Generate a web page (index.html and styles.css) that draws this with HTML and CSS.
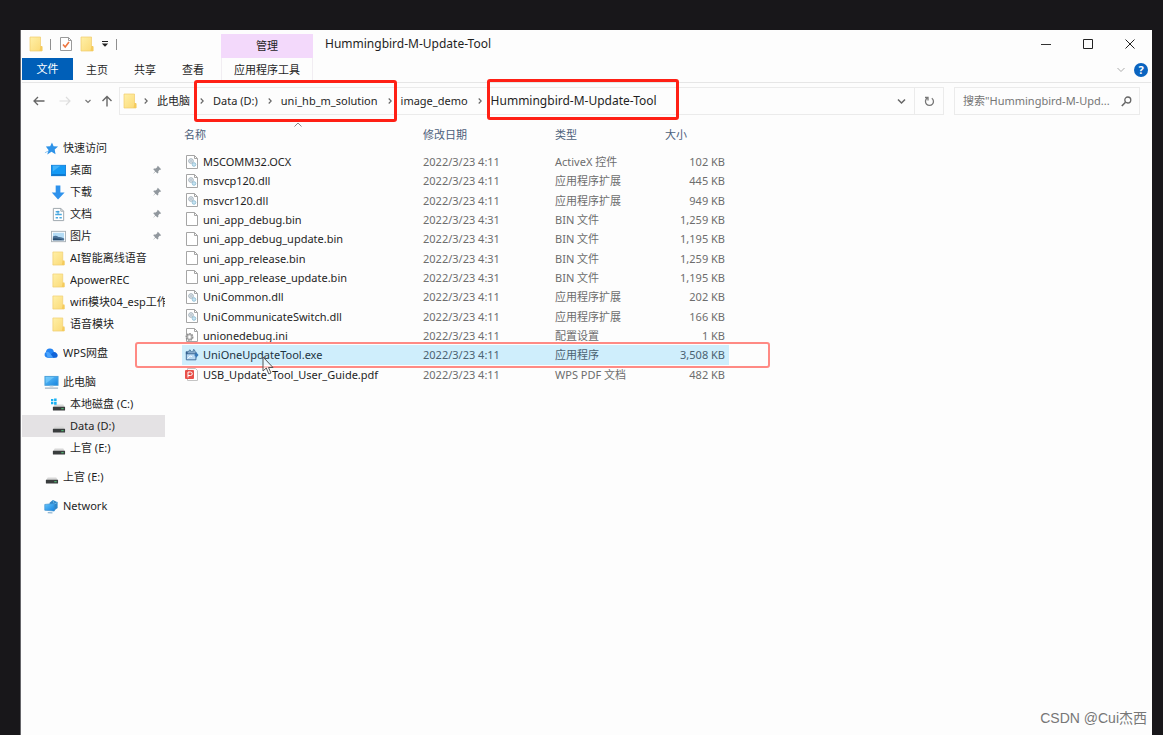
FILE: index.html
```
<!DOCTYPE html>
<html lang="zh-CN">
<head>
<meta charset="utf-8">
<title>Hummingbird-M-Update-Tool</title>
<link rel="stylesheet" href="styles.css">
</head>
<body>
<svg class="defs" aria-hidden="true">
  <defs>
    <linearGradient id="gf" x1="0" x2="1" y1="0" y2="1"><stop offset="0" stop-color="#fff0a8"/><stop offset="1" stop-color="#fbd975"/></linearGradient>
    <linearGradient id="gb" x1="0" x2="1" y1="0" y2="1"><stop offset="0" stop-color="#67c6fb"/><stop offset="1" stop-color="#1583e0"/></linearGradient>
    <symbol id="folder" viewBox="0 0 14 16"><path d="M1 1h10.500v10H13v4H1z" fill="url(#gf)" stroke="#f0cc6c" stroke-width=".7"/><path d="M10.500 15l1-5h1.800v5z" fill="#f5cb5c"/></symbol>
    <symbol id="page" viewBox="0 0 14 16"><path d="M1.500 1.500h8l3 3v10h-11z" fill="#fff" stroke="#a5a5a5"/><path d="M9.500 1.500v3h3" fill="none" stroke="#a5a5a5"/></symbol>
    <symbol id="dll" viewBox="0 0 14 16"><use href="#page"/><circle cx="6" cy="7" r="2.300" fill="#e4ebf0" stroke="#a3b0ba"/><circle cx="6" cy="7" r=".8" fill="#97a6b3"/><circle cx="9" cy="10.500" r="1.800" fill="#c8e4f2" stroke="#98c3d8"/></symbol>
    <symbol id="ini" viewBox="0 0 14 16"><use href="#page"/><circle cx="4.500" cy="10" r="3.200" fill="#e5e5e5" stroke="#8f8f8f" stroke-width="1.600" stroke-dasharray="1.600 .8"/><circle cx="4.500" cy="10" r="2.500" fill="#ddd" stroke="#999"/><circle cx="4.500" cy="10" r="1" fill="#fff"/></symbol>
    <symbol id="exe" viewBox="0 0 16 16"><path d="M1.500 4.500h11v9h-11z" fill="#b9d9f3" stroke="#35618f"/><path d="M1 4h2v2h10v1H1z" fill="#35618f"/><path d="M4 4l1.500-2L7 4M9 4l1-2.500 1.500 2" fill="none" stroke="#35618f"/><path d="M11 6.500h1.500V4.500l3 3.500-3 3.500v-2H11z" fill="#3679b9"/><path d="M3 12l3-3 2 1" stroke="#fff" fill="none"/></symbol>
    <symbol id="pdf" viewBox="0 0 14 16"><path d="M2.500 2.500h8l2 2v10h-10z" fill="#fff" stroke="#c4c4c4"/><rect x="0" y="4" width="9" height="9" rx="1" fill="#e8504a"/><path d="M3 11.500V6h2.500a1.500 1.500 0 0 1 0 3.500H3" fill="none" stroke="#fff"/></symbol>
    <symbol id="star" viewBox="0 0 16 16"><path d="M8.500 1.500l1.700 4.200 4.800.2-3.600 3.200.9 4.900-4.300-2.500L3.500 14.500l1.300-5L2 5.900l4.600-.2z" fill="#2e93e8"/><path d="M1 12.500l4-2" stroke="#8cc4f2"/></symbol>
    <symbol id="desktop" viewBox="0 0 16 16"><rect x=".5" y="2.500" width="15" height="11" fill="#149af5" stroke="#1683dc"/><path d="M1 12h14v1.500H1z" fill="#0b70c4"/><path d="M2 3h8L2 9z" fill="#43b3fa"/></symbol>
    <symbol id="down" viewBox="0 0 16 16"><path d="M5 .5h5v7.500h4.500L7.500 15.500.8 8H5z" fill="#2e92ec"/></symbol>
    <symbol id="doc" viewBox="0 0 16 16"><path d="M2.500 1.500h8l3 3v10h-11z" fill="#fff" stroke="#9aa3aa"/><path d="M10.500 1.500v3h3" fill="none" stroke="#9aa3aa"/><path d="M5 5h4M4.500 8h7M5 11.500h2.500M9 11.500h2.500" stroke="#4baae0" stroke-width="1.500"/><path d="M7.500 4v4" stroke="#3a9bd8"/></symbol>
    <symbol id="pic" viewBox="0 0 16 16"><rect x=".5" y="2.500" width="15" height="11" fill="#fff" stroke="#a9b2b8"/><rect x="2" y="4" width="12" height="8" fill="#b4dcf6"/><path d="M2 8q3-2 6 .5 3-.5 6 1.500v2H2z" fill="#4c7398"/><path d="M2 10q5-1 12 2H2z" fill="#294e70"/></symbol>
    <symbol id="pin" viewBox="0 0 12 12"><path d="M7 1l4 4-1 .8-.8-.2-1.700 1.800.1 2-1 .8L4.200 8 1 11l2.800-3.500L1.500 5l.9-.9 2.100.1L6.500 2.500l-.2-.8z" fill="#91989e"/></symbol>
    <symbol id="cloud" viewBox="0 0 16 16"><path d="M3.500 12.500a3.300 3.300 0 0 1-1.500-6A4.300 4.300 0 0 1 10.500 6L11.500 12.500z" fill="#2484f2"/><path d="M4 12.500L8.500 7.800a3.400 3.400 0 0 1 5 0 2.800 2.800 0 0 1-.5 4.700z" fill="#1264d8"/><path d="M2 6.500q3-1 4.500 1.500L10 12.500H4z" fill="#4ba3fb"/></symbol>
    <symbol id="pc" viewBox="0 0 16 16"><rect x="1" y="1.500" width="14" height="9.500" fill="url(#gb)" stroke="#4aa0d9"/><path d="M2 2h9L2 9z" fill="#80d1fb" opacity=".6"/><path d="M6 11.500h4V13H6z" fill="#d5dfe6"/><path d="M1 14h14" stroke="#a6b7c4" stroke-width="1.400"/></symbol>
    <symbol id="drive" viewBox="0 0 16 16"><path d="M4 8h9l2 3H2z" fill="#d8d8d8"/><rect x="2" y="10.500" width="13" height="4" rx=".6" fill="#3a3d3e"/><rect x="11" y="12" width="2.500" height="1" fill="#56d47d"/></symbol>
    <symbol id="sysdrive" viewBox="0 0 16 16"><use href="#drive"/><path d="M0 2h2.500v2.500H0zM3.300 1.500H6v3H3.300zM0 5.200h2.500v2.500H0zM3.300 5.200H6v3H3.300z" fill="#18b1f3"/></symbol>
    <symbol id="net" viewBox="0 0 16 16"><path d="M9.500 1l5 2.500v6L10 13 6 9V4z" fill="#2f86c8"/><path d="M9.500 1.500l1.500 4 3.500-2" fill="none" stroke="#6db9e8"/><path d="M.8 5.800L11 4.800v8L.8 12z" fill="url(#gb)" stroke="#3b8fce" stroke-width=".7"/><path d="M4 14.500l5 .3" stroke="#8fb5d0" stroke-width="1.300"/></symbol>
    <symbol id="chev" viewBox="0 0 8 8"><path d="M2.700 1.500L5.200 4 2.700 6.500" fill="none" stroke="#666" stroke-width="1.100"/></symbol>
  </defs>
</svg>

<div class="window">
  <header class="titlebar">
    <div class="quick">
      <svg class="i14"><use href="#folder"/></svg>
      <span class="bar"></span>
      <button class="qbtn prop" aria-label="属性"><svg class="i14" viewBox="0 0 14 16"><path d="M1.500 1.500h8l3 3v10h-11z" fill="#fff" stroke="#9a9a9a"/><path d="M9.500 1.500v3h3" fill="none" stroke="#9a9a9a"/><path d="M4 8.500l2.200 2.500L10 6" fill="none" stroke="#ee7640" stroke-width="1.600"/></svg></button>
      <button class="qbtn" aria-label="新建文件夹"><svg class="i14"><use href="#folder"/></svg></button>
      <button class="qbtn more" aria-label="自定义"><svg width="8" height="8" viewBox="0 0 8 8"><path d="M1 1.500h6" stroke="#222"/><path d="M.8 3.500h6.400L4 6.800z" fill="#222"/></svg></button>
      <span class="bar"></span>
    </div>
    <div class="context">管理</div>
    <h1 class="title">Hummingbird-M-Update-Tool</h1>
    <div class="controls">
      <button aria-label="最小化"><svg width="10" height="10"><path d="M0 5.500h10" stroke="#333"/></svg></button>
      <button aria-label="最大化"><svg width="10" height="10"><path d="M.5.5h9v9h-9z" fill="none" stroke="#222"/></svg></button>
      <button aria-label="关闭"><svg width="10" height="10"><path d="M.5.5l9 9M9.500.5l-9 9" stroke="#222"/></svg></button>
    </div>
  </header>
  <nav class="tabs">
    <button class="tab file">文件</button>
    <button class="tab">主页</button>
    <button class="tab">共享</button>
    <button class="tab">查看</button>
    <button class="tab tools">应用程序工具</button>
    <span class="space"></span>
    <button class="plain" aria-label="展开功能区"><svg width="8" height="6" viewBox="0 0 8 6"><path d="M.5 1L4 4.500 7.500 1" fill="none" stroke="#aaa"/></svg></button>
    <button class="help" aria-label="帮助">?</button>
  </nav>

  <div class="navrow">
    <div class="arrows">
      <button class="plain" aria-label="后退"><svg width="12" height="10" viewBox="0 0 12 10"><path d="M11.500 5H1M5 1L1 5l4 4" fill="none" stroke="#666" stroke-width="1.300"/></svg></button>
      <button class="plain" aria-label="前进"><svg width="12" height="10" viewBox="0 0 12 10"><path d="M.5 5H11M7 1l4 4-4 4" fill="none" stroke="#ddd" stroke-width="1.200"/></svg></button>
      <button class="plain" aria-label="最近"><svg width="6" height="5" viewBox="0 0 6 5"><path d="M.5 1L3 3.500 5.500 1" fill="none" stroke="#777" stroke-width="1.200"/></svg></button>
      <button class="plain" aria-label="向上"><svg width="12" height="12" viewBox="0 0 12 12"><path d="M6 11.500V1.500M1.500 6L6 1.500 10.500 6" fill="none" stroke="#666" stroke-width="1.400"/></svg></button>
    </div>
    <div class="address">
      <svg class="i14"><use href="#folder"/></svg>
      <svg class="sep first"><use href="#chev"/></svg>
      <button class="crumb">此电脑</button>
      <svg class="sep"><use href="#chev"/></svg>
      <button class="crumb">Data (D:)</button>
      <svg class="sep"><use href="#chev"/></svg>
      <button class="crumb">uni_hb_m_solution</button>
      <svg class="sep"><use href="#chev"/></svg>
      <button class="crumb">image_demo</button>
      <svg class="sep"><use href="#chev"/></svg>
      <button class="crumb current">Hummingbird-M-Update-Tool</button>
      <span class="space"></span>
      <button class="drop" aria-label="历史记录"><svg width="9" height="7" viewBox="0 0 9 7"><path d="M1 1.500l3.500 3.500L8 1.500" fill="none" stroke="#666" stroke-width="1.500"/></svg></button>
      <button class="refresh" aria-label="刷新"><svg width="11" height="11" viewBox="0 0 11 11"><path d="M3 2.300a4 4 0 1 0 4.800-.1M1 1.500h3v3" fill="none" stroke="#777" stroke-width="1.300"/></svg></button>
    </div>
    <div class="search">
      <input type="text" aria-label="搜索" placeholder="搜索&quot;Hummingbird-M-Upd...">
      <svg width="11" height="11" viewBox="0 0 11 11"><circle cx="6.800" cy="4" r="3" fill="none" stroke="#666" stroke-width="1.300"/><path d="M4.500 6.200L.8 10" stroke="#666" stroke-width="1.600"/></svg>
    </div>
  </div>

  <div class="content">
    <aside class="side">
      <ul>
        <li class="root"><svg><use href="#star"/></svg><span>快速访问</span></li>
        <li><svg><use href="#desktop"/></svg><span>桌面</span><svg class="pin"><use href="#pin"/></svg></li>
        <li><svg><use href="#down"/></svg><span>下载</span><svg class="pin"><use href="#pin"/></svg></li>
        <li><svg><use href="#doc"/></svg><span>文档</span><svg class="pin"><use href="#pin"/></svg></li>
        <li><svg><use href="#pic"/></svg><span>图片</span><svg class="pin"><use href="#pin"/></svg></li>
        <li><svg><use href="#folder"/></svg><span>AI智能离线语音</span></li>
        <li><svg><use href="#folder"/></svg><span>ApowerREC</span></li>
        <li><svg><use href="#folder"/></svg><span>wifi模块04_esp工作</span></li>
        <li><svg><use href="#folder"/></svg><span>语音模块</span></li>
      </ul>
      <ul><li class="root"><svg><use href="#cloud"/></svg><span>WPS网盘</span></li></ul>
      <ul>
        <li class="root"><svg><use href="#pc"/></svg><span>此电脑</span></li>
        <li><svg><use href="#sysdrive"/></svg><span>本地磁盘 (C:)</span></li>
        <li class="on"><svg><use href="#drive"/></svg><span>Data (D:)</span></li>
        <li><svg><use href="#drive"/></svg><span>上官 (E:)</span></li>
      </ul>
      <ul><li class="root"><svg><use href="#drive"/></svg><span>上官 (E:)</span></li></ul>
      <ul><li class="root"><svg><use href="#net"/></svg><span>Network</span></li></ul>
    </aside>

    <main class="files">
      <svg class="sort" viewBox="0 0 8 5"><path d="M.5 4.500L4 1l3.500 3.500" fill="none" stroke="#888"/></svg>
      <table>
        <colgroup><col class="c1"><col class="c2"><col class="c3"><col class="c4"></colgroup>
        <thead><tr><th>名称</th><th>修改日期</th><th>类型</th><th>大小</th></tr></thead>
        <tbody>
          <tr><td><svg><use href="#dll"/></svg>MSCOMM32.OCX</td><td>2022/3/23 4:11</td><td>ActiveX 控件</td><td>102 KB</td></tr>
          <tr><td><svg><use href="#dll"/></svg>msvcp120.dll</td><td>2022/3/23 4:11</td><td>应用程序扩展</td><td>445 KB</td></tr>
          <tr><td><svg><use href="#dll"/></svg>msvcr120.dll</td><td>2022/3/23 4:11</td><td>应用程序扩展</td><td>949 KB</td></tr>
          <tr><td><svg><use href="#page"/></svg>uni_app_debug.bin</td><td>2022/3/23 4:31</td><td>BIN 文件</td><td>1,259 KB</td></tr>
          <tr><td><svg><use href="#page"/></svg>uni_app_debug_update.bin</td><td>2022/3/23 4:31</td><td>BIN 文件</td><td>1,195 KB</td></tr>
          <tr><td><svg><use href="#page"/></svg>uni_app_release.bin</td><td>2022/3/23 4:31</td><td>BIN 文件</td><td>1,259 KB</td></tr>
          <tr><td><svg><use href="#page"/></svg>uni_app_release_update.bin</td><td>2022/3/23 4:31</td><td>BIN 文件</td><td>1,195 KB</td></tr>
          <tr><td><svg><use href="#dll"/></svg>UniCommon.dll</td><td>2022/3/23 4:11</td><td>应用程序扩展</td><td>202 KB</td></tr>
          <tr><td><svg><use href="#dll"/></svg>UniCommunicateSwitch.dll</td><td>2022/3/23 4:11</td><td>应用程序扩展</td><td>166 KB</td></tr>
          <tr><td><svg><use href="#ini"/></svg>unionedebug.ini</td><td>2022/3/23 4:11</td><td>配置设置</td><td>1 KB</td></tr>
          <tr class="sel"><td><svg><use href="#exe"/></svg>UniOneUpdateTool.exe</td><td>2022/3/23 4:11</td><td>应用程序</td><td>3,508 KB</td></tr>
          <tr><td><svg><use href="#pdf"/></svg>USB_Update_Tool_User_Guide.pdf</td><td>2022/3/23 4:11</td><td>WPS PDF 文档</td><td>482 KB</td></tr>
        </tbody>
      </table>
    </main>
  </div>

  <div class="mark mark-path"></div>
  <div class="mark mark-folder"></div>
  <div class="mark mark-file"></div>
  <svg class="cursor" viewBox="0 0 12 19"><path d="M1 1v14l3.300-3 2.500 6 2.200-1-2.500-5.500H11z" fill="#fff" fill-opacity=".5" stroke="#555"/></svg>
  <div class="credit">CSDN @Cui杰西</div>
</div>
</body>
</html>
```
FILE: styles.css
```
* { box-sizing: border-box; }
body {
  margin: 0;
  min-height: 100vh;
  padding: 30px 11px 0 20px;
  display: flex;
  background: #18171a;
  color: #1f1f1f;
  font: 11px/16px "Noto Sans", "Noto Sans CJK SC", sans-serif;
}
button, input { font: inherit; color: inherit; border: 0; background: none; padding: 0; margin: 0; }
svg { display: block; flex: none; }
ul { list-style: none; margin: 0; padding: 0; }
.defs { position: absolute; width: 0; height: 0; }
.space { flex: 1; }
.window { position: relative; flex: 1; min-width: 0; background: #fdfdfd; display: flex; flex-direction: column; border-left: 1px solid #66666a; padding: 0 1px; }

.titlebar { display: flex; height: 28px; }
.quick { width: 199px; display: flex; align-items: center; gap: 7px; padding-left: 7px; }
.i14 { width: 14px; height: 16px; }
.bar { width: 1px; height: 11px; background: #8f8f8f; }
.prop { margin-left: 1px; }
.more { width: 8px; }
.context { width: 92px; margin-top: 4px; background: #f3d9fb; text-align: center; line-height: 24px; }
.title { margin: 0; padding-left: 12px; font-size: 12px; font-weight: 400; line-height: 28px; flex: 1; }
.controls { display: flex; }
.controls button { width: 42px; display: grid; place-items: center; }

.tabs { display: flex; height: 25px; border-bottom: 1px solid #e6e6e6; padding-right: 3px; align-items: center; }
.tab { width: 48px; height: 24px; line-height: 22px; }
.file { width: 51px; height: 22px; background: #005fb8; color: #fff; align-self: flex-start; }
.tools { width: 92px; margin-left: 4px; border: 1px solid #f1edf2; border-width: 0 1px; }
.plain { display: grid; place-items: center; }
.help { width: 14px; height: 14px; margin-left: 9px; border-radius: 50%; background: #0a64c0; color: #fff; font-weight: 700; line-height: 14px; text-align: center; }

.navrow { display: flex; gap: 10px; padding: 4px 11px 0 11px; height: 33px; }
.arrows { display: flex; align-items: center; gap: 14px; width: 76px; height: 28px; }
.arrows button + button + button { margin-right: -4px; }
.address, .search { display: flex; align-items: center; height: 28px; border: 1px solid #ebebeb; }
.address { flex: 1; padding-left: 3px; min-width: 0; }
.sep { width: 8px; height: 8px; margin: 0 7px 0 8px; }
.first { margin-left: 5px; }
.crumb { white-space: nowrap; }
.current { font-size: 12px; }
.drop { width: 26px; height: 26px; display: grid; place-items: center; }
.refresh { width: 29px; height: 26px; display: grid; place-items: center; border-left: 1px solid #ebebeb; }
.search { width: 186px; padding: 0 7px 0 8px; gap: 6px; }
.search input { flex: 1; min-width: 0; }
.search input::placeholder { color: #757575; opacity: 1; }

.content { display: flex; flex: 1; }
.side { width: 143px; padding-top: 21px; display: flex; flex-direction: column; gap: 7px; overflow: hidden; }
.side li { display: flex; align-items: center; height: 22px; padding: 0 3px 0 29px; gap: 4px; white-space: nowrap; }
.side li svg { width: 15px; height: 15px; }
.side li.root { padding-left: 22px; }
.side li span { flex: 1; overflow: hidden; margin-right: -4px; }
.side li .pin { width: 10px; height: 10px; margin-right: 0; }
.side .on { background: #e4e2e4; }

.files { position: relative; padding: 9px 0 0 17px; }
.sort { position: absolute; left: 129px; top: 6px; width: 8px; height: 5px; }
table { width: 547px; height: 259px; table-layout: fixed; border-collapse: collapse; }
.c1 { width: 237px; }
.c2 { width: 132px; }
.c3 { width: 110px; }
.c4 { width: 68px; }
th, td { padding: 0 4px; text-align: left; font-weight: 400; white-space: nowrap; }
th { height: 27px; vertical-align: top; line-height: 19px; color: #4c607a; }
td { height: 19px; line-height: 19px; color: #6d6d6d; }
td:first-child { display: flex; align-items: center; gap: 4px; padding-left: 3px; color: #1f1f1f; }
td:first-child svg { width: 14px; height: 16px; }
td:last-child { text-align: right; }
th:first-child { padding-left: 2px; }
.sel { background: #cfeefc; }
.sel td { color: #4b6271; }
.sel td:first-child { color: #1d3442; }

.mark { position: absolute; border: 3px solid #ff2015; border-radius: 3px; }
.mark-path { left: 173px; top: 50px; width: 203px; height: 42px; }
.mark-folder { left: 466px; top: 49px; width: 192px; height: 41px; }
.mark-file { left: 114px; top: 312px; width: 635px; height: 26px; border: 2px solid #ff8a84; }
.cursor { position: absolute; left: 241px; top: 326px; width: 12px; height: 19px; }
.credit { position: absolute; right: 5px; bottom: 7px; font: 14px/20px "Liberation Sans", "Noto Sans CJK SC", sans-serif; color: #777; }
```
